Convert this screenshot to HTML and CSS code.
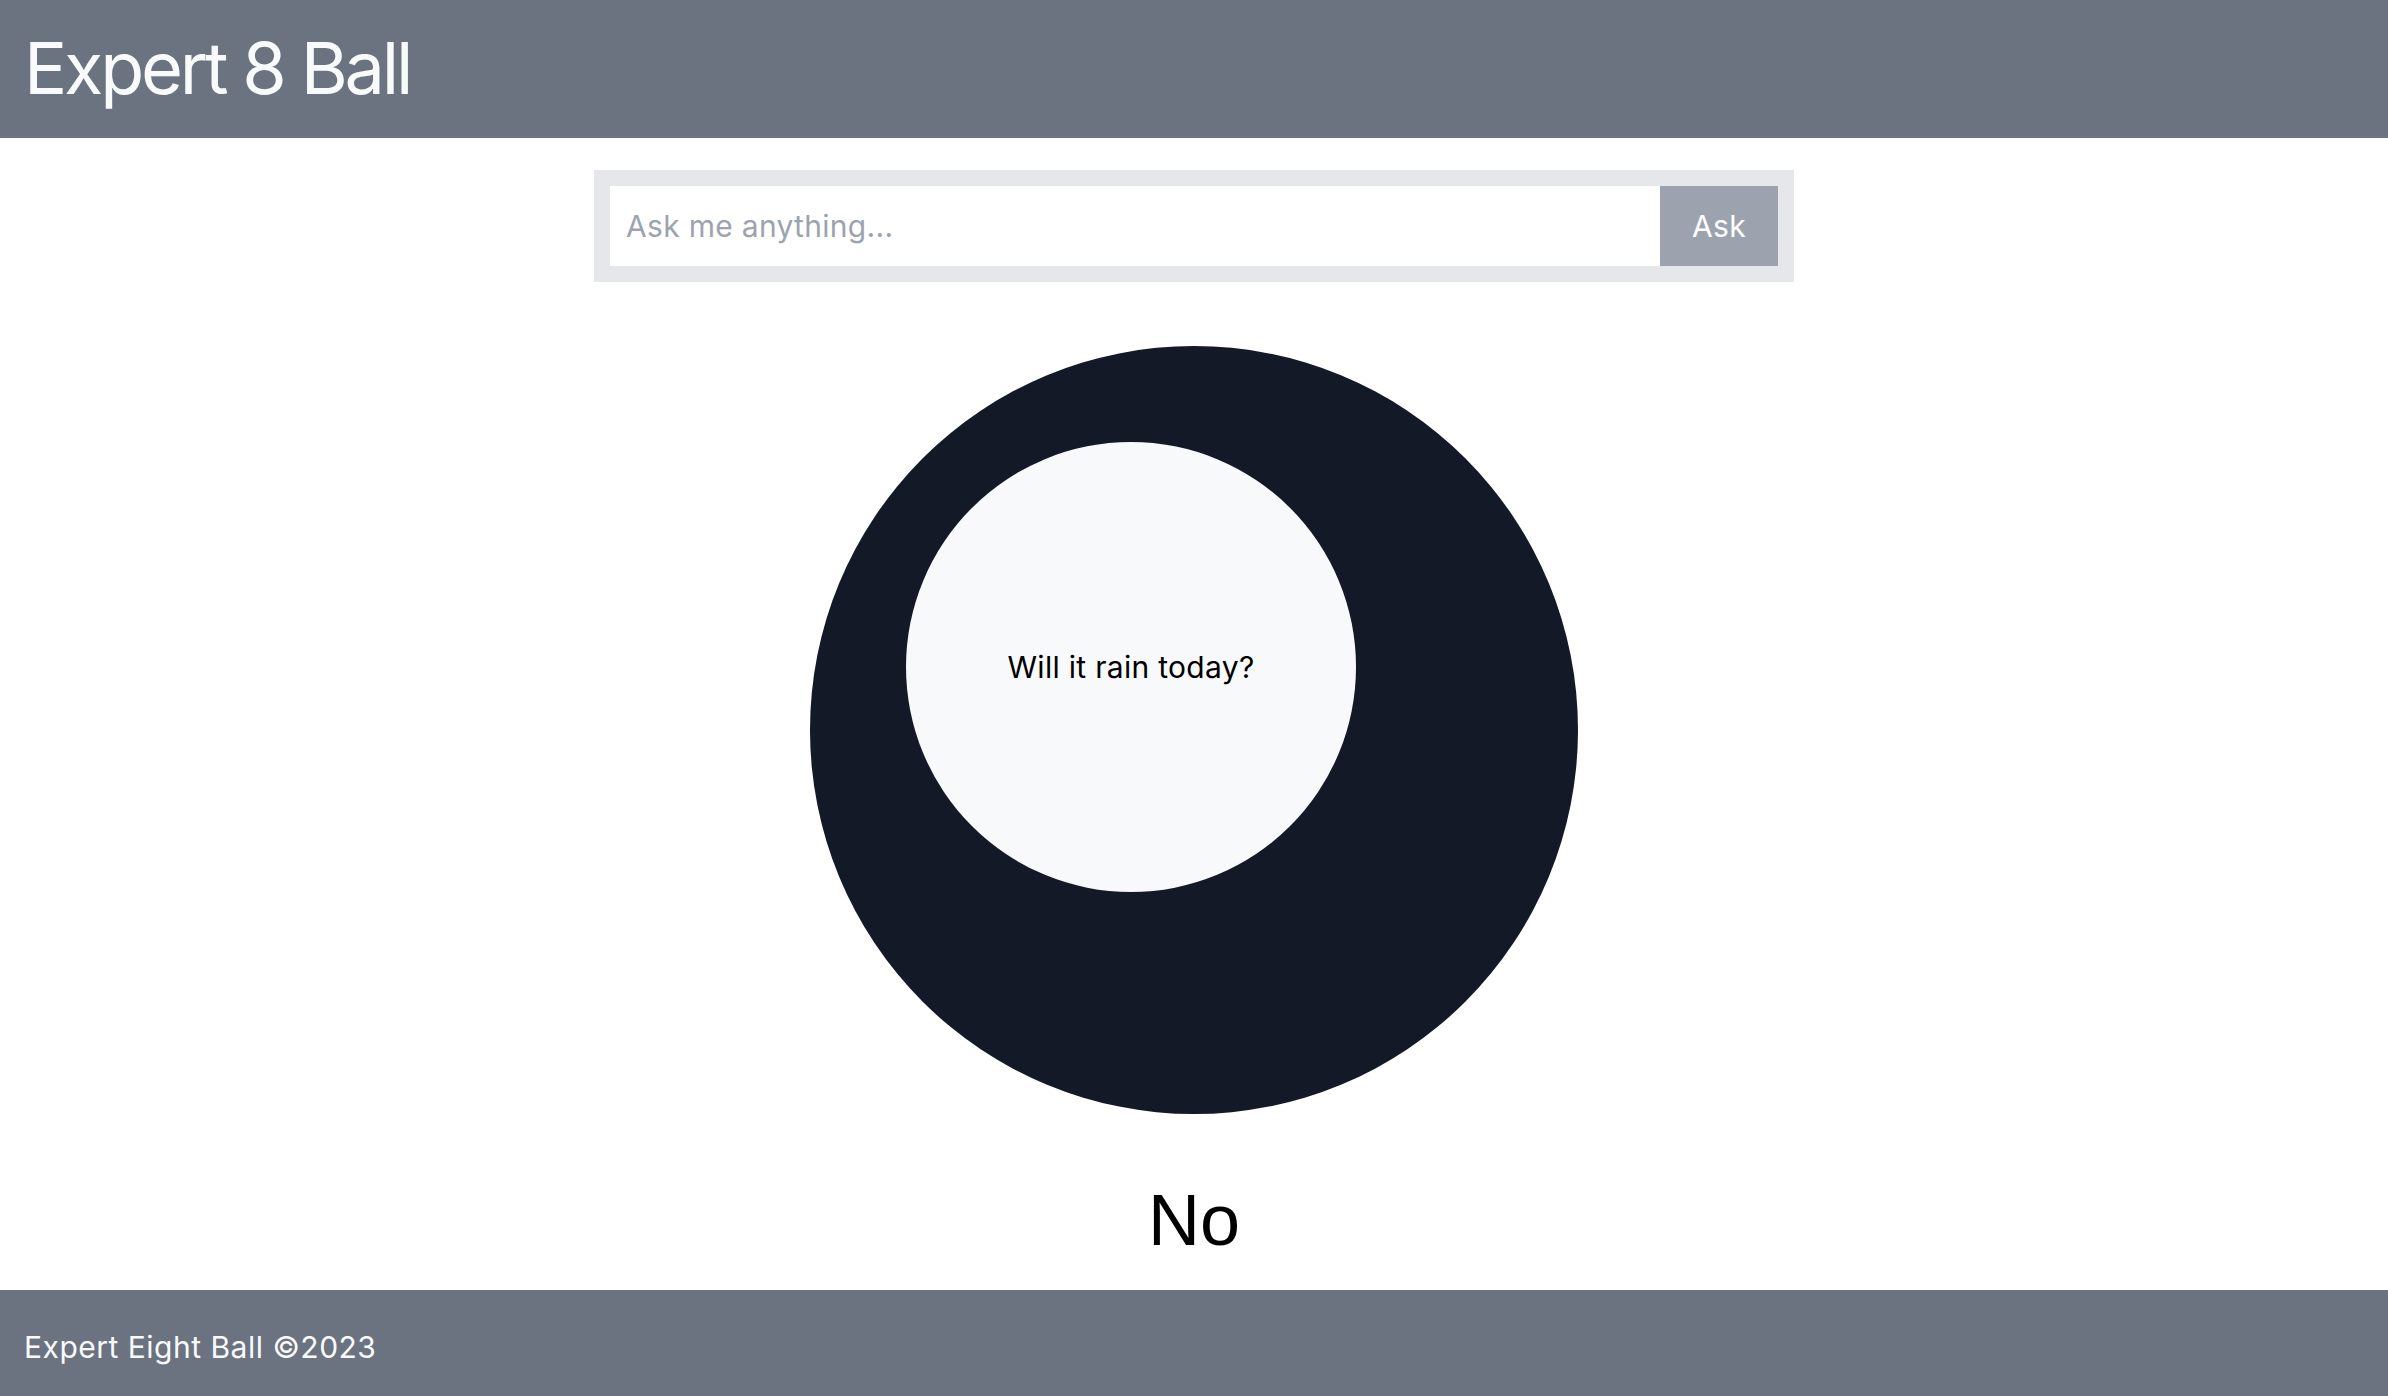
FILE: index.html
```html
<!DOCTYPE html>
<html lang="en">
<head>
<meta charset="utf-8">
<title>Expert 8 Ball</title>
<link rel="stylesheet" href="styles.css">
</head>
<body>
  <header class="site-header">
    <h1 class="site-title">Expert 8 Ball</h1>
  </header>
  <main class="main">
    <form class="ask-form">
      <input class="ask-input" type="text" placeholder="Ask me anything...">
      <button class="ask-button" type="button">Ask</button>
    </form>
    <div class="ball">
      <div class="window">
        <p class="question">Will it rain today?</p>
      </div>
    </div>
    <p class="answer">No</p>
  </main>
  <footer class="site-footer">
    <p class="footer-text">Expert Eight Ball ©2023</p>
  </footer>
</body>
</html>
```
FILE: styles.css
```css
* { box-sizing: border-box; }

html, body {
  margin: 0;
  padding: 0;
}

body {
  min-height: 100vh;
  display: flex;
  flex-direction: column;
  font-family: Inter, "Noto Sans", "Liberation Sans", sans-serif;
  background: #ffffff;
  color: #000000;
}

.site-header {
  background: #6b7280;
  padding: 32px 24px 34px;
}

.site-title {
  margin: 0;
  font-size: 72px;
  line-height: 72px;
  font-weight: 400;
  color: #f9fafb;
  letter-spacing: -3.2px;
}

.main {
  flex: 1;
  display: flex;
  flex-direction: column;
  align-items: center;
  padding-top: 32px;
}

.ask-form {
  width: 1200px;
  padding: 16px;
  background: #e5e7eb;
  display: flex;
  margin: 0;
}

.ask-input {
  flex: 1;
  height: 80px;
  border: none;
  outline: none;
  background: #ffffff;
  padding: 0 16px;
  font-family: Inter, "Noto Sans", sans-serif;
  font-size: 30px;
  color: #111827;
  letter-spacing: 0.3px;
}

.ask-input::placeholder {
  color: #9ca3af;
}

.ask-button {
  height: 80px;
  border: none;
  background: #9ca3af;
  color: #ffffff;
  padding: 0 32px;
  font-family: Inter, "Noto Sans", sans-serif;
  font-size: 30px;
  letter-spacing: 0.3px;
}

.ball {
  margin-top: 64px;
  width: 768px;
  height: 768px;
  border-radius: 50%;
  background: #141927;
  padding: 96px;
}

.window {
  width: 450px;
  height: 450px;
  border-radius: 50%;
  background: #f8f9fb;
  display: flex;
  align-items: center;
  justify-content: center;
}

.question {
  margin: 0;
  font-size: 30px;
  line-height: 36px;
  color: #000000;
  letter-spacing: 0.3px;
}

.answer {
  margin: 70px 0 0;
  font-family: "Liberation Sans", Arial, sans-serif;
  font-size: 72px;
  line-height: 72px;
  color: #000000;
}

.site-footer {
  background: #6b7280;
  padding: 35px 24px 26px;
}

.footer-text {
  margin: 0;
  font-size: 30px;
  line-height: 45px;
  color: #f9fafb;
  letter-spacing: 0.5px;
}
```
